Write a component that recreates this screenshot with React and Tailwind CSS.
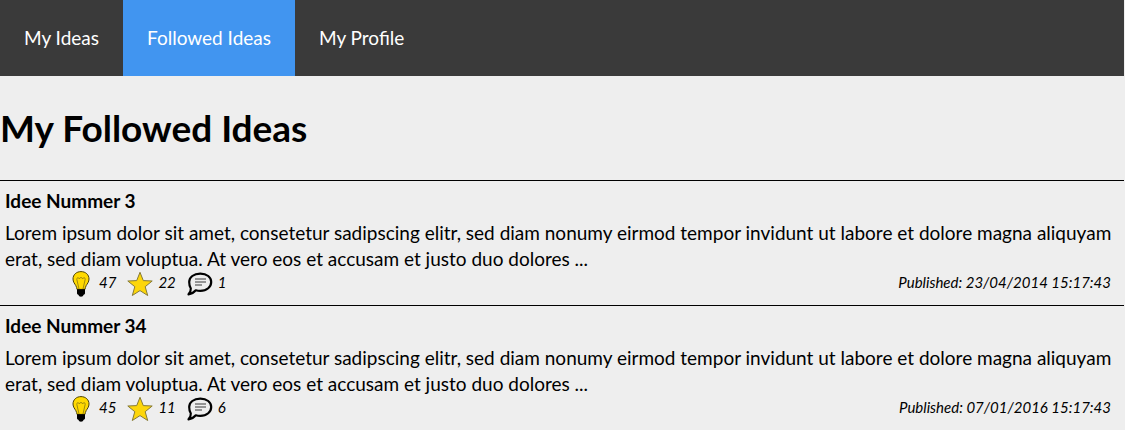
const ideas = [
  { id: 3, votes: 47, stars: 22, comments: 1, published: "23/04/2014 15:17:43" },
  { id: 34, votes: 45, stars: 11, comments: 6, published: "07/01/2016 15:17:43" },
];

const tabs = ["My Ideas", "Followed Ideas", "My Profile"];

function Bulb() {
  return (
    <svg width="18" height="26" viewBox="0 0 18 26" aria-hidden="true">
      <path
        d="M9 .6C4.400.6 1 3.700 1 8c0 3 1.800 4.800 2.800 6.600.8 1.400 1 2.600 1.200 3.800h8c.2-1.200.4-2.400 1.200-3.800C15.200 12.800 17 11 17 8 17 3.700 13.600.6 9 .6z"
        fill="#ffd900"
        stroke="#4a4108"
        strokeWidth="1"
      />
      <path
        d="M7 18 4.800 8.300c-.3-1.900 2.100-2.200 2.500-.4.300-1.800 3.100-1.800 3.400 0 .4-1.800 2.800-1.500 2.500.4L11 18"
        fill="none"
        stroke="#a08a10"
        strokeWidth="1"
      />
      <path d="M5 18.300h8v4c0 .8-.7 1.200-1.300 1.500l-1 1.500c-.9.6-2.500.6-3.400 0l-1-1.500c-.6-.3-1.300-.7-1.300-1.500z" fill="#000" />
    </svg>
  );
}

function Star() {
  return (
    <svg width="26" height="26" viewBox="0 0 26 26" aria-hidden="true">
      <path
        d="M13 1.300 16.300 9.600 25.200 10 18.200 15.700 20.700 24.500 13 19.600 5.300 24.500 7.800 15.700.8 10 9.700 9.600z"
        fill="#fdd60a"
        stroke="#857a3a"
        strokeWidth="1"
      />
    </svg>
  );
}

function Bubble() {
  return (
    <svg width="26" height="26" viewBox="0 0 26 26" fill="none" aria-hidden="true">
      <path
        d="M13.300 2.600C19.900 2.600 24.200 6.200 24.200 11s-4.300 8.900-10.900 8.900c-1.700 0-3.200-.2-4.500-.6-1.800 2.200-4.200 3.500-7.300 4 1.700-1.700 2.500-3.600 2.300-5.900C2.500 15.700 2.200 13.500 2.200 11c0-4.800 4.500-8.400 11.100-8.400z"
        stroke="#000"
        strokeWidth="2.200"
        strokeLinejoin="round"
      />
      <path d="M8 8h11M8 11h11M8 14h7" stroke="#777" strokeWidth="1.600" />
    </svg>
  );
}

function Stat({ icon, label, value }) {
  return (
    <li className="flex items-start gap-1" aria-label={label + ": " + value}>
      <span className="flex w-7 justify-center">{icon}</span>
      <span>{value}</span>
    </li>
  );
}

export default function App() {
  return (
    <div className="min-h-screen bg-[#eee] pr-px font-['Lato','Carlito',sans-serif] text-[19px] text-black">
      <nav className="flex bg-[#3a3a3a] text-white">
        {tabs.map((tab) => (
          <a
            key={tab}
            href="#"
            aria-current={tab === "Followed Ideas" ? "page" : undefined}
            className="px-6 py-6 leading-7 aria-[current=page]:bg-[#4195f0]"
          >
            {tab}
          </a>
        ))}
      </nav>
      <main>
        <h1 className="py-7 text-[37px] leading-12 font-bold">My Followed Ideas</h1>
        {ideas.map((idea) => (
          <article key={idea.id} className="border-t border-black px-[5px] pt-2 pb-2">
            <h2 className="pb-[7px] leading-6 font-bold">Idee Nummer {idea.id}</h2>
            <p className="leading-[26px]">
              Lorem ipsum dolor sit amet, consetetur sadipscing elitr, sed diam nonumy eirmod tempor invidunt ut labore
              et dolore magna aliquyam erat, sed diam voluptua. At vero eos et accusam et justo duo dolores ...
            </p>
            <div className="-mt-px flex items-start justify-between pr-2 pl-[62px] text-[15px] leading-[22px] italic">
              <ul className="flex gap-2.5">
                <Stat icon={<Bulb />} label="Votes" value={idea.votes} />
                <Stat icon={<Star />} label="Followers" value={idea.stars} />
                <Stat icon={<Bubble />} label="Comments" value={idea.comments} />
              </ul>
              <p>Published: {idea.published}</p>
            </div>
          </article>
        ))}
      </main>
    </div>
  );
}
